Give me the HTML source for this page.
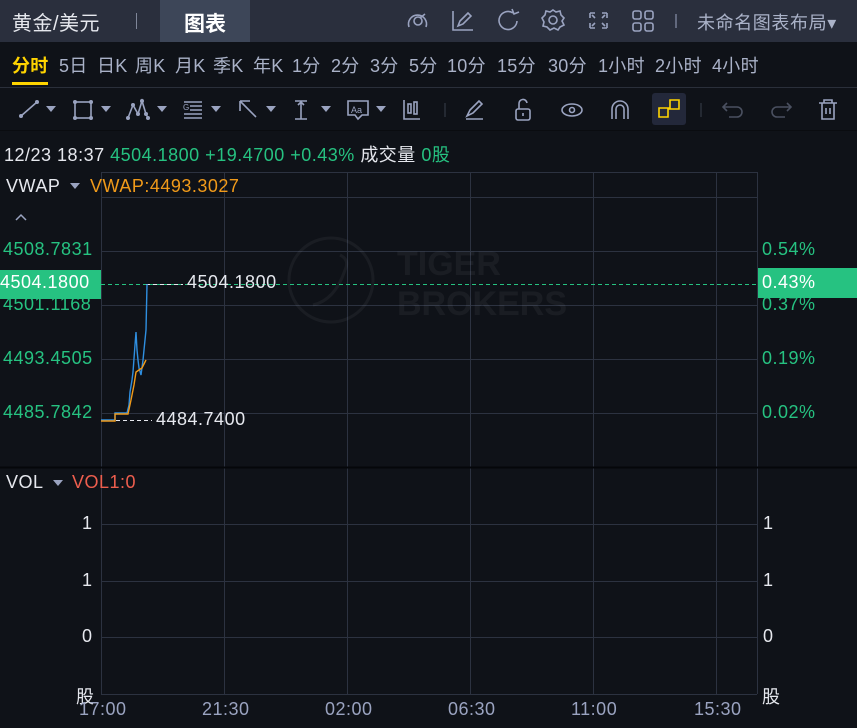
<!DOCTYPE html>
<html><head><meta charset="utf-8">
<style>
*{margin:0;padding:0;box-sizing:border-box}
body{width:857px;height:728px;background:#0f1218;font-family:"Liberation Sans","Noto Sans CJK SC",sans-serif;position:relative;overflow:hidden;color:#c9ccd6}
.a{position:absolute;white-space:nowrap}
.t{font-size:18px;letter-spacing:0.5px}
.hdr{left:0;top:0;width:857px;height:42px;background:#2a2f3d}
.g{color:#26c281}
.w{color:#e6e8ee}
.gl{color:#9aa3c0}
.p{position:absolute;top:52px;font-size:18px;color:#aab2c8;white-space:nowrap;letter-spacing:0.3px}
</style></head><body>
<div class="a hdr"></div>
<div class="a" style="left:160px;top:0;width:90px;height:42px;background:#3d4658"></div>
<div class="a w" style="left:12px;top:7px;font-size:20px;letter-spacing:0.5px">黄金/美元</div>
<div class="a" style="left:136px;top:13px;width:1px;height:16px;background:#7f8699"></div>
<div class="a" style="left:184px;top:8px;font-size:21px;font-weight:bold;color:#fff">图表</div>
<svg class="a" style="left:400px;top:6px" width="460" height="30" fill="none" stroke="#9aa3c0" stroke-width="1.6">
 <path d="M9 21 A9 9 0 1 1 26 21"/><circle cx="18" cy="15" r="4"/><path d="M20 12 L25 8"/>
 <path d="M53 5 V24 H73 M58 20 L60 15 L68 7 L71 10 L63 18 Z"/>
 <path d="M113 7 A9 9 0 1 0 117 15 M112 3 L114 8 L119 6"/>
 <circle cx="153" cy="14" r="4"/><path d="M153 4 L156 6 L160 5 L161 9 L164 12 L162 15 L164 19 L160 21 L158 24 L154 22 L150 24 L147 21 L143 20 L144 16 L142 12 L145 9 L146 5 L150 6 Z"/>
 <path d="M190 7 H195 M190 7 V12 M207 7 H202 M207 7 V12 M190 22 H195 M190 22 V17 M207 22 H202 M207 22 V17 M192 9 L195 12 M205 9 L202 12 M192 20 L195 17 M205 20 L202 17"/>
 <rect x="233" y="5" width="8" height="8" rx="2"/><rect x="245" y="5" width="8" height="8" rx="2"/><rect x="233" y="17" width="8" height="8" rx="2"/><rect x="245" y="17" width="8" height="8" rx="2"/>
 <path d="M276 8 V22" stroke-width="1"/>
</svg>
<div class="a" style="left:697px;top:9px;font-size:18px;letter-spacing:0.6px;color:#aab2c8">未命名图表布局▾</div>

<div class="p" style="left:12px;color:#ffd400;font-weight:bold">分时</div>
<div class="p" style="left:59px">5日</div>
<div class="p" style="left:97px">日K</div>
<div class="p" style="left:135px">周K</div>
<div class="p" style="left:175px">月K</div>
<div class="p" style="left:213px">季K</div>
<div class="p" style="left:253px">年K</div>
<div class="p" style="left:292px">1分</div>
<div class="p" style="left:331px">2分</div>
<div class="p" style="left:370px">3分</div>
<div class="p" style="left:409px">5分</div>
<div class="p" style="left:447px">10分</div>
<div class="p" style="left:497px">15分</div>
<div class="p" style="left:548px">30分</div>
<div class="p" style="left:598px">1小时</div>
<div class="p" style="left:655px">2小时</div>
<div class="p" style="left:712px">4小时</div>
<div class="a" style="left:12px;top:82px;width:36px;height:3px;background:#ffd400"></div>
<div class="a" style="left:0;top:87px;width:857px;height:1px;background:#2a2f3a"></div>

<svg class="a" style="left:0;top:92px" width="857" height="36" fill="none" stroke="#9aa3c0" stroke-width="1.6">
 <g fill="#9aa3c0" stroke="none">
  <path d="M46 14 h10 l-5 6z"/><path d="M101 14 h10 l-5 6z"/><path d="M157 14 h10 l-5 6z"/><path d="M211 14 h10 l-5 6z"/><path d="M266 14 h10 l-5 6z"/><path d="M321 14 h10 l-5 6z"/><path d="M376 14 h10 l-5 6z"/>
  <circle cx="21" cy="24" r="2"/><circle cx="37" cy="10" r="2"/>
  <circle cx="75" cy="10" r="2"/><circle cx="91" cy="10" r="2"/><circle cx="75" cy="26" r="2"/><circle cx="91" cy="26" r="2"/>
  <circle cx="128" cy="26" r="2"/><circle cx="133" cy="13" r="2"/><circle cx="138" cy="22" r="2"/><circle cx="142" cy="9" r="2"/><circle cx="146" cy="22" r="2"/><circle cx="148" cy="26" r="2"/>
 </g>
 <path d="M21 24 L37 10"/><rect x="75" y="10" width="16" height="16"/>
 <path d="M128 26 L133 13 L138 22 L142 9 L146 22 L148 26"/>
 <path d="M184 10 H202 M190 14 H202 M190 18 H202 M184 22 H202 M184 26 H202"/><text x="183" y="18" font-size="8" fill="#9aa3c0" stroke="none">G</text>
 <path d="M240 9 L256 25 M240 9 V19 M240 9 H250"/>
 <path d="M295 9 H307 M295 27 H307 M301 9 V27 M298 13 L301 10 L304 13"/>
 <path d="M348 9 H368 V23 H362 L358 27 L355 23 H348 Z"/><text x="351" y="21" font-size="9" fill="#9aa3c0" stroke="none">Aa</text>
 <path d="M404 8 V27 H420"/><rect x="408" y="12" width="3" height="9"/><rect x="414" y="10" width="3" height="12"/>
 <path d="M445 11 V25" stroke="#2a2f3a"/>
 <path d="M467 24 L470 18 L479 9 L482 12 L473 21 Z M466 27 H483"/>
 <rect x="516" y="17" width="14" height="11" rx="2"/><path d="M519 17 V12 A4 4 0 0 1 527 11 M523 21 V24"/>
 <ellipse cx="572" cy="18" rx="10" ry="6"/><circle cx="572" cy="18" r="2.5"/>
 <path d="M612 27 V17 A8 8 0 0 1 628 17 V27 M616 27 V17 A4 4 0 0 1 624 17 V27"/>
 <rect x="652" y="1" width="34" height="32" rx="3" fill="#23283a" stroke="none"/>
 <path d="M659 16 H668 V25 H659 Z M670 8 H679 V17 H670 Z M668 18 V16 H670 M670 15 V17 H668" stroke="#ffd400"/>
 <path d="M701 11 V25" stroke="#2a2f3a"/>
 <path d="M727 11 L723 15 L727 19 M723 15 H737 A5 5 0 0 1 737 25 H729" stroke="#4a5060"/>
 <path d="M787 11 L791 15 L787 19 M791 15 H777 A5 5 0 0 0 777 25 H785" stroke="#4a5060"/>
 <path d="M819 11 H837 M824 11 V8 H832 V11 M822 11 V27 H834 V11 M826 16 V22 M830 16 V22"/>
</svg>
<div class="a" style="left:0;top:130px;width:857px;height:1px;background:#0a0c10"></div>

<div class="a t" style="left:4px;top:141px"><span class="w">12/23 18:37 </span><span class="g">4504.1800 +19.4700 +0.43% </span><span class="w">成交量 </span><span class="g">0股</span></div>

<svg class="a" style="left:0;top:0" width="857" height="728">
 <g stroke="#2c3240" stroke-width="1" fill="none">
  <path d="M101.5 172 V467 M224.5 172 V467 M347.5 172 V467 M470.5 172 V467 M593.5 172 V467 M716.5 172 V467 M757.5 172 V467"/>
  <path d="M101 172.5 H757 M101 197.5 H757 M101 251.5 H757 M101 305.5 H757 M101 359.5 H757 M101 413.5 H757"/>
  <path d="M101.5 468 V694 M224.5 468 V694 M347.5 468 V694 M470.5 468 V694 M593.5 468 V694 M716.5 468 V694 M757.5 468 V694"/>
  <path d="M101 524.5 H757 M101 581.5 H757 M101 637.5 H757 M101 694.5 H757"/>
 </g>
 <path d="M0 467.5 H857" stroke="#05070a" stroke-width="2"/>
 <g opacity="0.06" stroke="#c9ccd6" fill="none" stroke-width="3"><circle cx="331" cy="280" r="42"/><path d="M313 305 Q335 300 345 270 Q350 260 340 255"/></g>
 <text x="397" y="275" font-size="34" font-weight="bold" fill="#c9ccd6" opacity="0.06" font-family="Liberation Sans">TIGER</text>
 <text x="397" y="315" font-size="34" font-weight="bold" fill="#c9ccd6" opacity="0.06" font-family="Liberation Sans">BROKERS</text>
 <path d="M101 284.5 H757" stroke="#26c281" stroke-dasharray="4 3"/>
 <path d="M146 284.5 H183" stroke="#e6e8ee" stroke-dasharray="4 3"/>
 <path d="M116 420.5 H152" stroke="#e6e8ee" stroke-dasharray="4 3"/>
 <path d="M101 420 H115 V413 H127 L129 405 L130 392 L132 380 L133 372 L135 345 L136 332 L137 350 L138 360 L139 368 L141 375 L143 360 L146 330 L147 284" stroke="#2f8fe0" stroke-width="1.4" fill="none"/>
 <path d="M101 421 H115 V414 H128 L131 400 L134 385 L136 372 L139 370 L142 368 L146 360" stroke="#f09a1a" stroke-width="1.4" fill="none"/>
 <rect x="0" y="270" width="101" height="29" fill="#26c281"/>
 <rect x="758" y="268" width="99" height="30" fill="#26c281"/>
 <path d="M70 183 h10 l-5 6z M53 480 h10 l-5 6z" fill="#9aa3c0"/>
 <path d="M16 220 L21 215 L26 220" stroke="#9aa3c0" stroke-width="1.5" fill="none"/>
</svg>

<div class="a w t" style="left:6px;top:176px">VWAP</div>
<div class="a t" style="left:90px;top:176px;color:#f09a1a">VWAP:4493.3027</div>
<div class="a g t" style="left:3px;top:239px">4508.7831</div>
<div class="a t" style="left:0;top:272px;color:#fff">4504.1800</div>
<div class="a g t" style="left:3px;top:294px">4501.1168</div>
<div class="a g t" style="left:3px;top:348px">4493.4505</div>
<div class="a g t" style="left:3px;top:402px">4485.7842</div>
<div class="a w t" style="left:187px;top:272px">4504.1800</div>
<div class="a w t" style="left:156px;top:409px">4484.7400</div>
<div class="a g t" style="left:762px;top:239px">0.54%</div>
<div class="a t" style="left:762px;top:272px;color:#fff">0.43%</div>
<div class="a g t" style="left:762px;top:294px">0.37%</div>
<div class="a g t" style="left:762px;top:348px">0.19%</div>
<div class="a g t" style="left:762px;top:402px">0.02%</div>

<div class="a w t" style="left:6px;top:472px">VOL</div>
<div class="a t" style="left:72px;top:472px;color:#ee5e4e">VOL1:0</div>
<div class="a w t" style="left:82px;top:513px">1</div>
<div class="a w t" style="left:82px;top:570px">1</div>
<div class="a w t" style="left:82px;top:626px">0</div>
<div class="a w t" style="left:76px;top:683px">股</div>
<div class="a w t" style="left:763px;top:513px">1</div>
<div class="a w t" style="left:763px;top:570px">1</div>
<div class="a w t" style="left:763px;top:626px">0</div>
<div class="a w t" style="left:762px;top:683px">股</div>
<div class="a gl t" style="left:79px;top:699px">17:00</div>
<div class="a gl t" style="left:202px;top:699px">21:30</div>
<div class="a gl t" style="left:325px;top:699px">02:00</div>
<div class="a gl t" style="left:448px;top:699px">06:30</div>
<div class="a gl t" style="left:571px;top:699px">11:00</div>
<div class="a gl t" style="left:694px;top:699px">15:30</div>
</body></html>
